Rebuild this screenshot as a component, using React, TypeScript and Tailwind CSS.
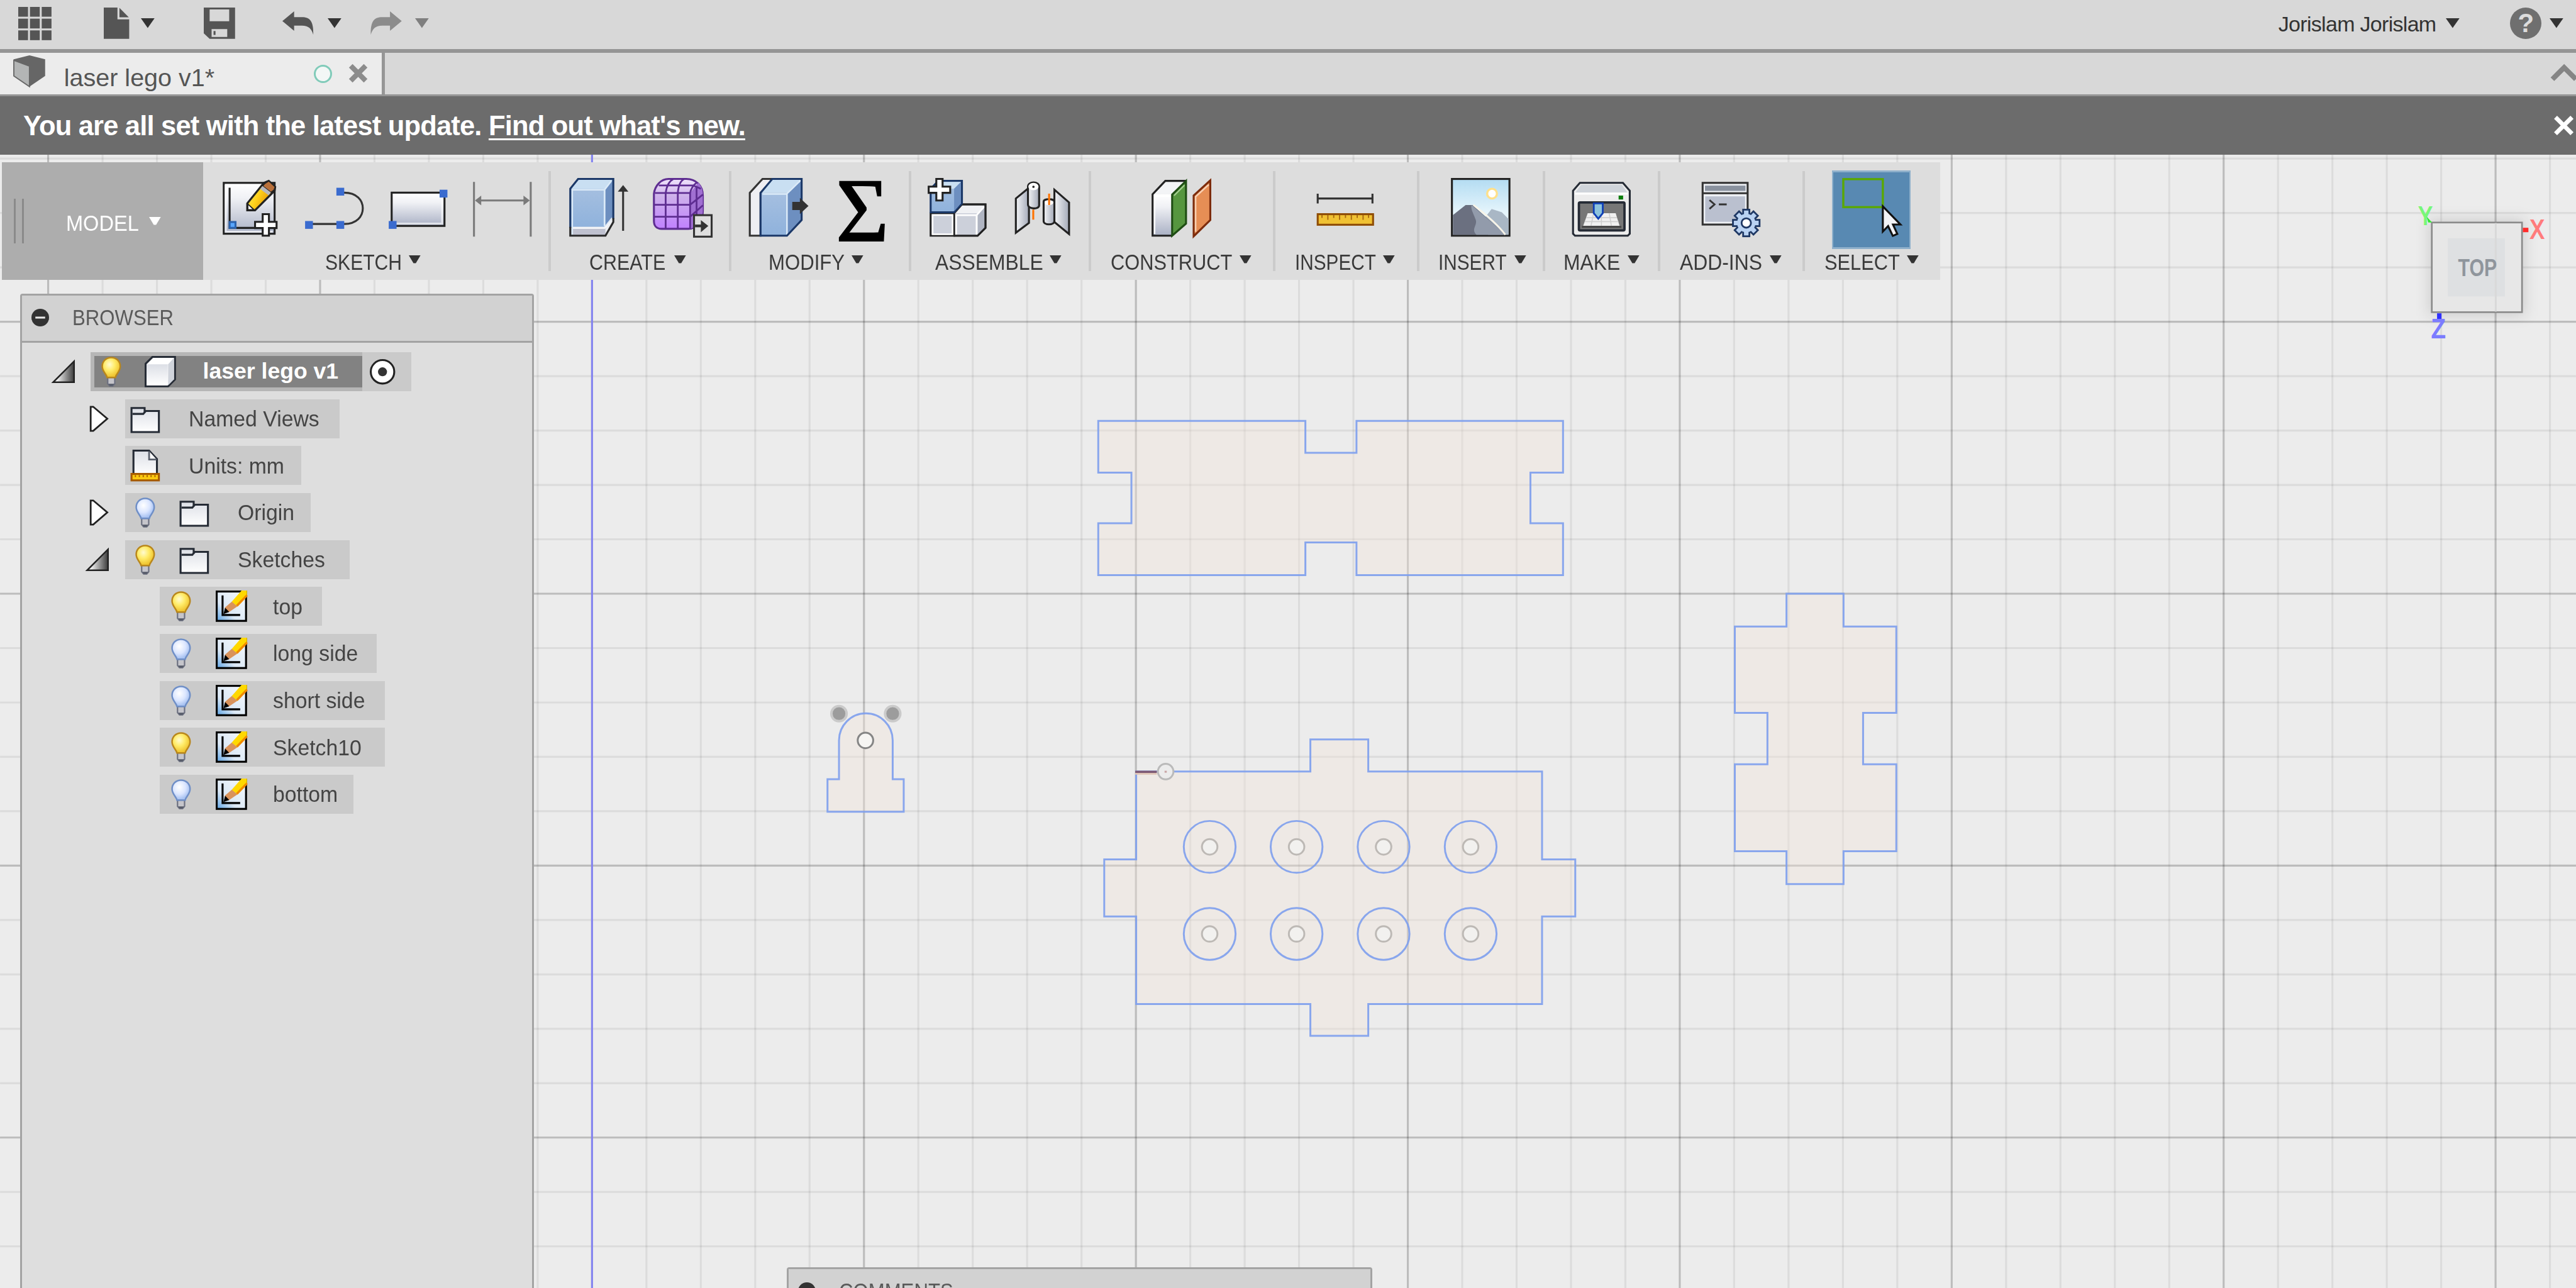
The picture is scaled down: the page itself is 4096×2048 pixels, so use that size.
import type { ReactNode } from "react";
import clsx from "clsx";

// One icon pixel on this display
const UNIT = 3.111;

const GRID_MINOR = 98.26;
const GRID_ORIGIN = { x: 1069.6, y: 1563.9 };

type IconProps = { w?: number; h?: number; className?: string; children: ReactNode };

function Icon({ w = 32, h = 32, className, children }: IconProps) {
  return (
    <svg
      width={w * UNIT}
      height={h * UNIT}
      viewBox={`0 0 ${w} ${h}`}
      fill="none"
      className={clsx("block shrink-0 overflow-visible", className)}
    >
      {children}
    </svg>
  );
}

function Caret({ className = "text-[#333]" }: { className?: string }) {
  return (
    <Icon w={7} h={5} className={className}>
      <path d="M0 0H7L3.5 5Z" fill="currentColor" />
    </Icon>
  );
}

function SmallCaret({ className = "text-[#333]" }: { className?: string }) {
  return (
    <Icon w={6} h={4} className={className}>
      <path d="M0 0H6L3.6 4H2.4Z" fill="currentColor" />
    </Icon>
  );
}

/* ---------- shared gradients ---------- */

function Gradients() {
  return (
    <svg width="0" height="0" className="absolute">
      <defs>
        <linearGradient id="paper" x1="0" y1="0" x2="0" y2="1">
          <stop offset="0" stopColor="#ffffff" />
          <stop offset="0.3" stopColor="#f0f1f5" />
          <stop offset="1" stopColor="#a9b0c4" />
        </linearGradient>
        <linearGradient id="sheet" x1="0" y1="0" x2="0" y2="1">
          <stop offset="0" stopColor="#dcdfe6" />
          <stop offset="1" stopColor="#ffffff" />
        </linearGradient>
        <linearGradient id="blueFace" x1="0" y1="0" x2="0" y2="1">
          <stop offset="0" stopColor="#a5bfe0" />
          <stop offset="1" stopColor="#8fb2dc" />
        </linearGradient>
        <linearGradient id="purpleFace" x1="0" y1="0" x2="0" y2="1">
          <stop offset="0" stopColor="#f0e4fc" />
          <stop offset="0.35" stopColor="#cdb0ea" />
          <stop offset="1" stopColor="#c081ff" />
        </linearGradient>
        <linearGradient id="steel" x1="0" y1="0" x2="1" y2="0">
          <stop offset="0" stopColor="#f4f5f7" />
          <stop offset="1" stopColor="#a3a9b8" />
        </linearGradient>
        <linearGradient id="sky" x1="0" y1="0" x2="0" y2="1">
          <stop offset="0" stopColor="#b3dcf2" />
          <stop offset="0.6" stopColor="#e6f5fc" />
        </linearGradient>
        <linearGradient id="wedge" x1="0" y1="0" x2="1" y2="0">
          <stop offset="0.2" stopColor="#f0f0f0" />
          <stop offset="1" stopColor="#3c3c3c" />
        </linearGradient>
        <linearGradient id="pencil" x1="0" y1="0" x2="1" y2="0.5">
          <stop offset="0" stopColor="#fff27a" />
          <stop offset="0.5" stopColor="#ffd21c" />
          <stop offset="1" stopColor="#e08a00" />
        </linearGradient>
        <linearGradient id="water" x1="0" y1="1" x2="1" y2="0">
          <stop offset="0" stopColor="#5aa2e4" />
          <stop offset="0.35" stopColor="#dbe8f5" />
          <stop offset="1" stopColor="#f5f9fd" />
        </linearGradient>
        <radialGradient id="bulbOn" cx="0.4" cy="0.35" r="0.6">
          <stop offset="0" stopColor="#fffbd0" />
          <stop offset="0.5" stopColor="#ffec6a" />
          <stop offset="1" stopColor="#f0c531" />
        </radialGradient>
        <radialGradient id="bulbOff" cx="0.4" cy="0.35" r="0.6">
          <stop offset="0" stopColor="#ffffff" />
          <stop offset="0.6" stopColor="#dbe6ff" />
          <stop offset="1" stopColor="#a9c3f2" />
        </radialGradient>
        <filter id="soft" x="-30%" y="-30%" width="160%" height="160%">
          <feGaussianBlur stdDeviation="12" />
        </filter>
      </defs>
    </svg>
  );
}

/* ---------- top bar ---------- */

function TopBar() {
  return (
    <header className="flex h-[78px] shrink-0 items-center bg-[#d8d8d8] pb-1 text-[#555]">
      <Icon w={17} h={17} className="ml-[29px]">
        {[0, 6, 12].map((y) =>
          [0, 6, 12].map((x) => <rect key={`${x}-${y}`} x={x} y={y} width="5" height="5" fill="currentColor" />)
        )}
      </Icon>

      <Icon w={13} h={16} className="ml-[83px]">
        <path d="M0 0H7V6H13V16H0Z" fill="currentColor" />
        <path d="M8 0.2L12.8 5H8Z" fill="currentColor" />
      </Icon>
      <div className="ml-[19px]"><Caret /></div>

      <Icon w={16} h={16} className="ml-[78px]">
        <path
          d="M0 0H16V16H3L0 13.2ZM3 1V7H13V1ZM4 11V15H12V11Z"
          fill="currentColor"
          fillRule="evenodd"
        />
        <rect x="5" y="12" width="1" height="2" fill="currentColor" />
      </Icon>

      <Icon w={16} h={12} className="ml-[75px]">
        <path d="M6 0V3H10C14 3 16 5 15.8 12C15 9 13.5 7.3 10 7.3H6V10L0 5Z" fill="currentColor" />
      </Icon>
      <div className="ml-[22px]"><Caret /></div>

      <Icon w={16} h={12} className="ml-[47px] text-[#8c8c8c]">
        <path d="M10 0V3H6C2 3 0 5 0.2 12C1 9 2.5 7.3 6 7.3H10V10L16 5Z" fill="currentColor" />
      </Icon>
      <div className="ml-[21px]"><Caret className="text-[#7f7f7f]" /></div>

      <div className="mr-5 ml-auto flex items-center">
        <span className="mt-[2px] text-[34px] leading-none tracking-[-0.7px] text-[#333]">Jorislam Jorislam</span>
        <div className="ml-4"><Caret /></div>
        <div className="ml-[80px] flex size-[50px] items-center justify-center rounded-full bg-[#6f6f6f] text-[42px] leading-none font-bold text-[#dcdcdc]">
          ?
        </div>
        <div className="ml-[13px]"><Caret /></div>
      </div>
    </header>
  );
}

function TabStrip() {
  return (
    <div className="flex h-[75px] shrink-0 border-t-6 border-b-3 border-[#959595] bg-[#d8d8d8]">
      <div className="flex w-[612px] items-center border-r-[5px] border-[#969696] bg-[#ececec]">
        <Icon w={16} h={16} className="mb-2 ml-[22px]">
          <path d="M8 0L16 2V10.5L8 16L0 10.5V2Z" fill="#666" />
          <path d="M0 2.5L8 5.5V16L0 10.5Z" fill="#b3b5b5" stroke="#666" strokeWidth="0.6" />
        </Icon>
        <span className="mt-[14px] ml-[30px] w-[242px] text-[39.5px] leading-none whitespace-nowrap text-[#555]">
          laser lego v1*
        </span>
        <div className="ml-[155px] size-[29px] rounded-full border-[3px] border-[#80cbb9] bg-[#f3f7f6]" />
        <Icon w={10} h={10} className="ml-[26px]">
          <path d="M1.2 1.2L8.8 8.8M8.8 1.2L1.2 8.8" stroke="#8c8c8c" strokeWidth="2.6" />
        </Icon>
      </div>
      <Icon w={13} h={8} className="mt-[19px] ml-auto">
        <path d="M0.8 7.4L6.8 1.4L12.8 7.4" stroke="#858585" strokeWidth="2.6" />
      </Icon>
    </div>
  );
}

function UpdateBanner() {
  return (
    <div className="flex h-[93px] shrink-0 items-center bg-[#6c6c6c] pl-[37px] text-white">
      <p className="mt-[2px] text-[43.5px] leading-none font-bold tracking-[-0.82px] whitespace-pre">
        You are all set with the latest update.{" "}
        <a href="#" className="underline decoration-[3px] underline-offset-[5px]">Find out what's new.</a>
      </p>
      <Icon w={10} h={10} className="mr-[4px] ml-auto">
        <path d="M0.8 0.8L9.2 9.2M9.2 0.8L0.8 9.2" stroke="#fff" strokeWidth="2.2" />
      </Icon>
    </div>
  );
}

/* ---------- toolbar icons ---------- */

function Plus({ x, y }: { x: number; y: number }) {
  return (
    <path
      transform={`translate(${x} ${y})`}
      d="M4.4 0.5H7.6V4.4H11.5V7.6H7.6V11.5H4.4V7.6H0.5V4.4H4.4Z"
      fill="#fff"
      stroke="#222"
    />
  );
}

const blueSquare = (x: number, y: number) => <rect x={x} y={y} width="4" height="4" fill="#3a6bcf" />;

function CreateSketchIcon() {
  return (
    <Icon>
      <rect x="2.5" y="2.5" width="26" height="26" fill="url(#paper)" stroke="#222" />
      <path d="M3.5 3.5V27.5H27.5" stroke="#fff" strokeOpacity="0.7" />
      <path d="M5.5 5V25.5H19" stroke="#222" />
      <rect x="5.5" y="22.5" width="3" height="3" fill="#58a6ff" stroke="#2b62ad" />
      <path d="M14.5 13L23 2.5L25.5 1.5L28.8 4.5L28.5 6.5L18.5 16.5H14.5Z" fill="url(#pencil)" stroke="#222" />
      <path d="M23.5 2.8L25.5 1.5L28.8 4.5L28.2 6.2L26.6 7.4L22.3 4.1Z" fill="#b9703a" stroke="#222" strokeWidth="0.6" />
      <path d="M22.3 4.1L26.6 7.4L25.4 8.8L21.1 5.6Z" fill="#b8b8bd" />
      <path d="M14.8 13.3L17.9 16.2H14.8Z" fill="#fff" stroke="#222" strokeWidth="0.6" />
      <Plus x={18} y={18} />
    </Icon>
  );
}

function SplineIcon() {
  return (
    <Icon>
      <path d="M3 23.5H21C27.5 23.5 30.5 19.5 30.5 15.5S27.5 7.5 21 7.5H19" stroke="#333" />
      {blueSquare(1, 22)}
      {blueSquare(17, 22)}
      {blueSquare(17, 5)}
    </Icon>
  );
}

function RectangleIcon() {
  return (
    <Icon>
      <rect x="2.5" y="7.5" width="27" height="17" fill="url(#paper)" stroke="#222" />
      <path d="M4 23.3H28.3V9" stroke="#fff" strokeOpacity="0.6" />
      {blueSquare(27, 6)}
      {blueSquare(1, 22)}
    </Icon>
  );
}

function DimensionIcon() {
  return (
    <Icon>
      <path d="M1.5 2V30M30.5 2V30M3 11.5H29" stroke="#7a7a7a" />
      <path d="M2 11.5L5.2 9V14ZM30 11.5L26.8 9V14Z" fill="#7a7a7a" />
    </Icon>
  );
}

function ExtrudeIcon() {
  return (
    <Icon>
      <path d="M2.5 25H20.5V29.5H2.5Z" fill="#bfc1cf" />
      <path d="M20.5 25L24.5 20V23L20.5 29.5Z" fill="#eceef2" />
      <path d="M2.5 5.5L6.5 0.5H24.5L20.5 5.5Z" fill="#c9dff2" />
      <path d="M2.5 5.5H20.5V25H2.5Z" fill="url(#blueFace)" />
      <path d="M20.5 5.5L24.5 0.5V20.5L20.5 25Z" fill="#6d8fc0" />
      <path d="M3.5 25.5H20L24 20.5" stroke="#fff" strokeOpacity="0.8" />
      <path d="M3.5 29V6H20V24.5M20 6L23.5 1.5" stroke="#dcebf8" strokeWidth="0.8" />
      <path d="M2.5 25.5V5.5L6.5 0.5H24.5V21" stroke="#1b3868" />
      <path d="M2.5 25V29.5H20.5L24.5 22.5V20.5" stroke="#2a2a2a" />
      <path d="M29.5 5V27" stroke="#333" />
      <path d="M29.5 3.6L32.2 7H26.8Z" fill="#333" />
    </Icon>
  );
}

function FormIcon() {
  return (
    <Icon>
      <path
        d="M2.5 8C3 4 6 0.5 10 0.5H19C24 0.5 27.5 4 27.5 9V17C27.5 22 24 26 20 26H6.5C3.5 26 2.5 24 2.5 22Z"
        fill="url(#purpleFace)"
        stroke="#5e2d91"
      />
      <path d="M21 8C23 5 24.5 3 25.3 2.5C27 4.5 27.5 6.5 27.5 9V17C27.5 21 24.5 24.5 21.3 26Z" fill="#a06fd2" />
      <path
        d="M3 7.7H21V26M8.5 7.7V26M14.7 7.7V26M2.5 13.7H21L27.5 8.5M2.5 19.8H21L27.5 14M5 3.8H22.5L26.5 5.5M8.5 7.7C9 4 10.5 1.5 12.5 0.5M14.7 7.7C15 4 16 1.5 18 0.5M21 7.7C21.5 5 23.5 3 24.5 2.2M24.3 4.2V23"
        stroke="#5e2d91"
        strokeWidth="0.9"
      />
      <rect x="23" y="19" width="9" height="11" fill="#dedede" stroke="#333" />
      <path d="M23.5 24.5H28" stroke="#333" strokeWidth="1.4" />
      <path d="M26.5 21.5L30.3 24.5L26.5 27.7Z" fill="#333" />
    </Icon>
  );
}

function PressPullIcon() {
  return (
    <Icon>
      <path d="M2 7.6L8.5 0.5H14L7.5 7.6V29.5H2Z" fill="#eeeef2" stroke="#333" />
      <path d="M7.5 7.6L13.5 0.5H28.5L21 7.6Z" fill="#c9dff2" />
      <path d="M7.5 7.6H21V29.5H7.5Z" fill="url(#blueFace)" />
      <path d="M21 7.6L28.5 0.5V21.5L21 29.5Z" fill="#6d8fc0" />
      <path d="M8.5 8.2H21V29M21 8L28 1.2" stroke="#dcebf8" strokeWidth="0.8" />
      <path d="M7.5 7.6L13.5 0.5H28.5V21.5L21 29.5H7.5Z" stroke="#1b3868" />
      <path d="M23.7 12.2H27.6V10.2L32 14.3L27.6 18.4V16.4H23.7Z" fill="#333" />
    </Icon>
  );
}

function ParametersIcon() {
  return (
    <div className="flex size-[100px] items-center justify-center pt-[4px] pl-[4px] font-['Liberation_Serif',serif] text-[144px] leading-none text-black [-webkit-text-stroke:2px_black]">
      Σ
    </div>
  );
}

function NewComponentIcon() {
  return (
    <Icon>
      <path d="M14.5 18L18.5 13.5H30.5V25.5L26.5 29.5H14.5Z" fill="#f0f1f4" stroke="#222" />
      <path d="M14.5 18H26.5V29.5H14.5Z" fill="#ccd0da" />
      <path d="M26.5 18L30.5 13.5V25.5L26.5 29.5Z" fill="#b0b5c2" />
      <path d="M15.5 29V19H26V29M26 19L30 14.5" stroke="#fff" strokeWidth="0.9" />
      <path d="M2.5 18H14.5V29.5H2.5Z" fill="#ccd0da" stroke="#222" />
      <path d="M3.5 28.8V19H13.7V28.8Z" stroke="#fff" strokeWidth="0.8" />
      <path d="M14.5 29.5H26.5L30.5 25.5V13.5H18.5" stroke="#222" />
      <path d="M2.5 5.5L6.5 1.5H18.5V13L14.5 17.5H2.5Z" fill="url(#blueFace)" stroke="#1b3868" />
      <path d="M4 5.5L7 2H18L14.5 5.5Z" fill="#c9dff2" />
      <path d="M14.5 5.5L18 2V13L14.5 17Z" fill="#6d8fc0" />
      <Plus x={1} y={0} />
    </Icon>
  );
}

function JointIcon() {
  return (
    <Icon>
      <path d="M3.3 10.5L10 5V23L3.3 28Z" fill="url(#steel)" stroke="#222" />
      <path d="M9.5 4.5C9.5 1.5 15.2 1.5 15.2 4.5V14C15.2 16.3 9.5 16 9.5 13.5Z" fill="url(#steel)" stroke="#222" />
      <ellipse cx="12.3" cy="4.4" rx="2.6" ry="1.9" fill="#fff" />
      <circle cx="12.3" cy="4.5" r="0.6" fill="#222" />
      <path d="M12.2 16.2V21.3" stroke="#ff7300" />
      <path d="M17.5 12C17.5 10.5 23 10.5 23 12V22C23 24.3 17.5 24.3 17.5 22Z" fill="url(#steel)" stroke="#222" />
      <path d="M23 6L30.5 12.5V28.7L23 22.5Z" fill="url(#steel)" stroke="#222" />
      <ellipse cx="20.2" cy="12.6" rx="2.2" ry="1.3" fill="#fff" />
      <path d="M20.3 8V13.8" stroke="#ff7300" />
    </Icon>
  );
}

function OffsetPlaneIcon() {
  return (
    <Icon>
      <path d="M1.5 8.3L8 1.5H18.5L11.5 8.3Z" fill="#f3f4f6" />
      <path d="M1.5 8.3H11.5V29.5H1.5Z" fill="url(#paper)" />
      <path d="M2.5 28.6V9.2H10.8" stroke="#fff" strokeWidth="0.8" />
      <path d="M11.5 29.5H1.5V8.3L8 1.5H18.5" stroke="#222" />
      <path d="M11.5 8.5L18.6 1.5V23.3L11.5 29.5Z" fill="#56963f" stroke="#1f4d14" />
      <path d="M12.5 9L17.8 3.7" stroke="#a5cf92" strokeWidth="0.7" />
      <path d="M22.5 9L31 1.2V21.5L22.5 29.8Z" fill="#e68e55" stroke="#7d2c0c" />
      <path d="M23.5 27.5V9.6L30.2 3.4" stroke="#f8d0b2" strokeWidth="0.8" />
    </Icon>
  );
}

function MeasureIcon() {
  return (
    <Icon>
      <path d="M2 8V13M30 8V13M2 10.5H30" stroke="#333" />
      <rect x="2" y="18.5" width="28.3" height="5.4" fill="#f0c133" stroke="#8f4d05" />
      <path d="M4.2 19V20.4M7.2 19V21.4M10.2 19V20.4M13.2 19V21.4M16.2 19V20.4M19.2 19V21.4M22.2 19V20.4M25.2 19V21.4M28 19V20.4" stroke="#a86710" strokeWidth="0.6" />
    </Icon>
  );
}

function InsertImageIcon() {
  return (
    <Icon>
      <rect x="1.5" y="0.5" width="29.4" height="29" fill="url(#sky)" stroke="#222" />
      <circle cx="22" cy="8" r="2.5" fill="#fff" stroke="#ffe08a" strokeWidth="1.1" />
      <path d="M17 22L21.8 15.8L27 17.5L30.4 21V29H20Z" fill="#a9b7c5" />
      <path d="M2 19L8.5 13.8H12L29 29H2Z" fill="#6b7080" />
      <path d="M11.5 13.8L29 29H14C11 26 15 24 13.5 21C12.5 18 11 16 11.5 13.8Z" fill="#929bab" />
      <path d="M12.5 13.8C18 18 25 24 28.8 29" stroke="#f8f4e8" strokeWidth="0.9" />
    </Icon>
  );
}

function MakeIcon() {
  return (
    <Icon>
      <path d="M5.5 2.5H27.5L31 6.5V28.5L30 29.5H3L2 28.5V6.5Z" fill="#ececec" stroke="#252b35" />
      <path d="M3.2 7.5L6 3.5H27L29.8 7.5Z" fill="#cfd4da" />
      <path d="M3 8H30" stroke="#fff" />
      <rect x="25.3" y="9" width="2.3" height="2" fill="#0a7d0a" />
      <rect x="5" y="12.5" width="23.3" height="14.3" rx="0.6" fill="#777" stroke="#252b35" strokeWidth="1.2" />
      <path d="M9.5 18H23.8L25.8 24.4H7.2Z" fill="#f0f0f0" />
      <path d="M6.5 25H26.7" stroke="#444" strokeWidth="1" />
      <path d="M8.8 20.3H24.4M8 22.3H25.2M12.5 18L11.2 24.4M16.5 18V24.4M20.5 18L21.6 24.4" stroke="#cfcfcf" strokeWidth="0.5" />
      <path d="M12.6 13H17.2V18L14.9 20.8L12.6 18Z" fill="#8dc3dd" stroke="#0f3fb5" strokeWidth="0.9" />
    </Icon>
  );
}

function ScriptsIcon() {
  return (
    <Icon>
      <rect x="1.7" y="2.5" width="23" height="21.3" fill="#eef0f4" stroke="#333" />
      <rect x="2.9" y="3.9" width="20.7" height="2.7" fill="#8a929f" />
      <path d="M1.7 7.8H24.7" stroke="#333" />
      <rect x="3" y="9.4" width="20.4" height="13" fill="#bac0cf" />
      <path d="M5.2 11.3L7.8 13.5L5.2 15.8M10 13.5H14" stroke="#333" strokeWidth="0.9" />
      <g transform="translate(24 23)">
        {[0, 45, 90, 135, 180, 225, 270, 315].map((a) => (
          <rect key={a} x="-1.6" y="-6.8" width="3.2" height="4.5" fill="#b9d2f2" stroke="#1f3864" strokeWidth="0.9" transform={`rotate(${a})`} />
        ))}
        <circle r="4.7" fill="#b9d2f2" />
        <circle r="2.4" fill="#fff" stroke="#1f3864" strokeWidth="0.9" />
      </g>
    </Icon>
  );
}

function SelectIcon() {
  return (
    <Icon>
      <rect x="1.6" y="0.6" width="20.2" height="14.3" stroke="#5aa800" strokeWidth="1.1" />
      <path d="M21.8 14.5V27.4L24.5 24.6L26.9 29.6L29.2 28.6L27 23.8H30.8Z" fill="#f2f3f6" stroke="#111" />
    </Icon>
  );
}

/* ---------- toolbar ---------- */

type Group = {
  label: string;
  width: string;
  labelBox: string;
  stretch: string;
  nudge?: string;
  icons: (() => ReactNode)[];
};

const groups: Group[] = [
  { label: "SKETCH", width: "w-[551px]", labelBox: "w-[121px]", stretch: "scale-x-[0.86]", nudge: "mr-[12px]", icons: [CreateSketchIcon, SplineIcon, RectangleIcon, DimensionIcon] },
  { label: "CREATE", width: "w-[287px] pr-[4px]", labelBox: "w-[123px]", stretch: "scale-x-[0.87]", nudge: "mr-[4px]", icons: [ExtrudeIcon, FormIcon] },
  { label: "MODIFY", width: "w-[286px] pr-[3px]", labelBox: "w-[120px]", stretch: "scale-x-[0.89]", nudge: "mr-[10px]", icons: [PressPullIcon, ParametersIcon] },
  { label: "ASSEMBLE", width: "w-[286px] pr-[3px]", labelBox: "w-[170px]", stretch: "scale-x-[0.91]", nudge: "mr-[3px]", icons: [NewComponentIcon, JointIcon] },
  { label: "CONSTRUCT", width: "w-[293px] pr-[3px]", labelBox: "w-[193px]", stretch: "scale-x-[0.88]", icons: [OffsetPlaneIcon] },
  { label: "INSPECT", width: "w-[229px] pr-[4px]", labelBox: "w-[128px]", stretch: "scale-x-[0.85]", icons: [MeasureIcon] },
  { label: "INSERT", width: "w-[200px] pr-[2px]", labelBox: "w-[109px]", stretch: "scale-x-[0.85]", nudge: "ml-[5px]", icons: [InsertImageIcon] },
  { label: "MAKE", width: "w-[183px] pr-[3px]", labelBox: "w-[90px]", stretch: "scale-x-[0.91]", nudge: "ml-[2px]", icons: [MakeIcon] },
  { label: "ADD-INS", width: "w-[230px] pr-[2px]", labelBox: "w-[131px]", stretch: "scale-x-[0.91]", icons: [ScriptsIcon] },
  { label: "SELECT", width: "w-[217px] pr-[2px]", labelBox: "w-[119px]", stretch: "scale-x-[0.88]", icons: [SelectIcon] },
];

function ToolGroup({ group, last }: { group: Group; last: boolean }) {
  return (
    <div className={clsx("relative flex shrink-0 flex-col items-center pt-[13px]", group.width)}>
      <div className="flex gap-[9px]">
        {group.icons.map((ToolIcon, i) => (
          <div
            key={i}
            className={clsx(
              "flex size-[124.5px] items-center justify-center",
              group.label === "SELECT" && "border-x-2 border-y-[3px] border-[#8fb0cb] bg-[#5889b2]"
            )}
          >
            <ToolIcon />
          </div>
        ))}
      </div>
      <div className={clsx("mt-[3px] flex h-[36px] items-center gap-[12px]", group.nudge)}>
        <span className={clsx("text-[35px] leading-none whitespace-nowrap text-[#3a3a3a]", group.labelBox)}>
          <span className={clsx("inline-block origin-left", group.stretch)}>{group.label}</span>
        </span>
        <div className="-mt-2"><SmallCaret /></div>
      </div>
      {!last && <div className="absolute top-[14px] -right-[2px] h-[159px] w-1 bg-[#cbcbcb]" />}
    </div>
  );
}

function Toolbar() {
  return (
    <div className="mt-[12px] ml-[3px] flex h-[187px] w-[3082px] shrink-0 bg-[#ddd]">
      <div className="flex w-[320px] shrink-0 items-center bg-[#adadad] text-white">
        <div className="ml-[19px] h-[71px] w-[16px] border-x-[3px] border-[#8a8a8a]" />
        <span className="mt-[6px] ml-[67px] w-[117px] text-[35px] leading-none">
          <span className="inline-block origin-left scale-x-[0.93]">MODEL</span>
        </span>
        <div className="ml-[15px]"><SmallCaret className="text-white" /></div>
      </div>
      {groups.map((group, i) => (
        <ToolGroup key={group.label} group={group} last={i === groups.length - 1} />
      ))}
    </div>
  );
}

/* ---------- browser tree ---------- */

function Bulb({ on }: { on: boolean }) {
  return (
    <Icon w={16} h={16}>
      <path d="M6.2 11H9.8V14.2L8.8 15.3H7.2L6.2 14.2Z" fill="#c5c5cb" stroke="#6c7080" strokeWidth="0.7" />
      <path d="M6.5 14.2H9.5L8.7 15.3H7.3Z" fill="#555a68" />
      <path
        d="M8 0.8C10.8 0.8 12.6 2.9 12.6 5.4C12.6 8 10.4 9.2 10.1 11H5.9C5.6 9.2 3.4 8 3.4 5.4C3.4 2.9 5.2 0.8 8 0.8Z"
        fill={on ? "url(#bulbOn)" : "url(#bulbOff)"}
        stroke={on ? "#b9871c" : "#6f8fc7"}
        strokeWidth="0.8"
      />
    </Icon>
  );
}

function BodyIcon() {
  return (
    <Icon w={16} h={16}>
      <path d="M0.5 4L4 0.5H15.5V12L12 15.5H0.5Z" fill="#fff" stroke="#252b35" />
      <path d="M1 4.3H11.8V15H1Z" fill="url(#sheet)" />
      <path d="M12 4.3L15 1V12L12 15Z" fill="#d0d4dc" />
    </Icon>
  );
}

function FolderIcon() {
  return (
    <Icon w={16} h={16}>
      <path d="M1 2.5H7.7V4H15V14.8H1Z" fill="url(#sheet)" stroke="#252b35" />
      <path d="M1.5 5.5H7L8.2 4.2" stroke="#252b35" />
    </Icon>
  );
}

function UnitsIcon() {
  return (
    <Icon w={16} h={16}>
      <path d="M2 0.5H10L14 4.8V13H2Z" fill="url(#sheet)" stroke="#252b35" />
      <path d="M10 0.8V5H13.8" fill="#fff" stroke="#5a606c" strokeWidth="0.9" />
      <rect x="1" y="12.4" width="14" height="3.3" fill="#fbc910" stroke="#a65a00" />
      <path d="M3 13V14M5 13V14M7 13V14M9 13V14M11 13V14M13 13V14" stroke="#a65a00" strokeWidth="0.6" />
    </Icon>
  );
}

function SketchIcon() {
  return (
    <Icon w={16} h={16}>
      <rect x="0.5" y="0.5" width="15" height="15" fill="url(#water)" stroke="#000" />
      <path d="M3.5 2.5V12.5H12.5" stroke="#000" />
      <path d="M4.8 8.6L8.3 5.6L11.2 8L6.8 11L4.2 11.8Z" fill="#d9935c" />
      <path d="M4 12L4.8 8.8L6.9 10.9Z" fill="#000" />
      <path d="M8.2 5.7L13.2 0H16V3L11.2 8.1Z" fill="#ffd800" />
      <path d="M16 2.4L10.8 7.8" stroke="#f08a00" strokeWidth="1.1" />
    </Icon>
  );
}

function Expander({ open }: { open?: boolean }) {
  return open ? (
    <Icon w={12} h={12}>
      <path d="M11.5 0.8V11.5H0.8Z" fill="url(#wedge)" stroke="#222" strokeWidth="0.8" />
    </Icon>
  ) : (
    <Icon w={10} h={14}>
      <path d="M0.7 0.9H2L9.2 7L2 13.2H0.7Z" fill="#fff" stroke="#222" strokeWidth="0.9" />
    </Icon>
  );
}

type Node = {
  label: string;
  level: 2 | 3;
  width: string;
  expander?: "open" | "closed";
  bulb?: boolean;
  icon: () => ReactNode;
};

const nodes: Node[] = [
  { label: "Named Views", level: 2, width: "w-[341px]", expander: "closed", icon: FolderIcon },
  { label: "Units: mm", level: 2, width: "w-[280px]", icon: UnitsIcon },
  { label: "Origin", level: 2, width: "w-[295px]", expander: "closed", bulb: false, icon: FolderIcon },
  { label: "Sketches", level: 2, width: "w-[357px]", expander: "open", bulb: true, icon: FolderIcon },
  { label: "top", level: 3, width: "w-[258px]", bulb: true, icon: SketchIcon },
  { label: "long side", level: 3, width: "w-[345px]", bulb: false, icon: SketchIcon },
  { label: "short side", level: 3, width: "w-[358px]", bulb: false, icon: SketchIcon },
  { label: "Sketch10", level: 3, width: "w-[358px]", bulb: true, icon: SketchIcon },
  { label: "bottom", level: 3, width: "w-[308px]", bulb: false, icon: SketchIcon },
];

function TreeRow({ node }: { node: Node }) {
  const NodeIcon = node.icon;
  return (
    <div className="flex h-[62px] items-center">
      <div className={clsx("flex shrink-0 justify-end pr-[26px]", node.level === 2 ? "w-[164px]" : "w-[219px]")}>
        {node.expander && <Expander open={node.expander === "open"} />}
      </div>
      <div className={clsx("flex h-full items-center bg-[#cacaca]", node.level === 2 ? "pl-[7px]" : "pl-[9px]", node.width)}>
        {node.bulb !== undefined && (
          <div className={node.level === 2 ? "mr-[28px]" : "mr-[30px]"}><Bulb on={node.bulb} /></div>
        )}
        <NodeIcon />
        <span className={clsx("text-[35px] leading-none whitespace-nowrap text-[#444]", node.level === 2 ? "ml-[44px]" : "ml-[41px]")}>
          <span className="inline-block origin-left scale-x-[0.965]">{node.label}</span>
        </span>
      </div>
    </div>
  );
}

function PanelHeader({ title }: { title: string }) {
  return (
    <div className="flex h-[75px] shrink-0 items-center border-b-[3px] border-[#a3a3a3] bg-[#d2d2d2] pb-[2px] pl-[15px]">
      <Icon w={9} h={9}>
        <circle cx="4.5" cy="4.5" r="4.5" fill="#333" />
        <path d="M2 4.5H7" stroke="#e8e8e8" />
      </Icon>
      <span className="mb-[2px] ml-[37px] text-[35px] leading-none text-[#5a5a5a]">
        <span className="inline-block origin-left scale-x-[0.89]">{title}</span>
      </span>
    </div>
  );
}

function BrowserPanel() {
  return (
    <aside className="mt-[22px] ml-[32px] flex w-[817px] flex-col rounded-t border-x-[3px] border-t-[3px] border-[#a3a3a3] bg-[#dedede]">
      <PanelHeader title="BROWSER" />
      <div className="mt-[15px] flex flex-col gap-[12.66px]">
        <div className="flex h-[62px] items-center">
          <div className="flex w-[109px] shrink-0 justify-end pr-[25px]">
            <Expander open />
          </div>
          <div className="flex h-full w-[510px] bg-[#cacaca]">
            <div className="h-full w-[432px] bg-[#b6b6b6] py-[6px] pl-[6px]">
              <div className="flex h-full items-center bg-[#828282]">
                <div className="ml-[2px]"><Bulb on /></div>
                <div className="ml-[28px]"><BodyIcon /></div>
                <span className="ml-[43px] text-[35.6px] leading-none font-bold whitespace-nowrap text-white">
                  laser lego v1
                </span>
              </div>
            </div>
            <Icon w={13} h={13} className="ml-[12px] self-center">
              <circle cx="6.5" cy="6.5" r="6" fill="#fff" stroke="#222" />
              <circle cx="6.5" cy="6.5" r="2.3" fill="#333" />
            </Icon>
          </div>
        </div>
        {nodes.map((node) => (
          <TreeRow key={node.label} node={node} />
        ))}
      </div>
    </aside>
  );
}

/* ---------- canvas ---------- */

function GridLines() {
  const columns = Array.from({ length: 48 }, (_, i) => i - 10);
  const rows = Array.from({ length: 21 }, (_, i) => i - 13);
  return (
    <g>
      {columns.map((i) => {
        const x = GRID_ORIGIN.x + i * GRID_MINOR;
        return (
          <line key={i} x1={x} x2={x} y1="279" y2="2327" stroke="#000" strokeOpacity={i % 5 === 0 ? 0.2 : 0.065} strokeWidth="3.6" />
        );
      })}
      {rows.map((i) => {
        const y = GRID_ORIGIN.y + i * GRID_MINOR;
        return (
          <line key={i} x1="0" x2="4654" y1={y} y2={y} stroke="#000" strokeOpacity={i % 5 === 0 ? 0.2 : 0.065} strokeWidth="3.6" />
        );
      })}
      <line x1={GRID_ORIGIN.x} x2={GRID_ORIGIN.x} y1="279" y2="2327" stroke="#8484f2" strokeWidth="3.4" />
    </g>
  );
}

const profiles = [
  // long side
  "M1984.2 760.5H2358.4V818H2450.7V760.5H2823.9V853.8H2765V945.3H2823.9V1039.2H2450.7V980H2358.4V1039.2H1984.2V945.3H2044.1V853.8H1984.2Z",
  // short side
  "M3227.6 1072.5H3330.7V1132H3426V1288H3366V1380.7H3426V1538H3330.7V1597.2H3227.6V1538H3134.3V1380.7H3193.2V1288H3134.3V1132H3227.6Z",
  // top plate
  "M2052.7 1393.8H2367.4V1336H2472V1393.8H2786V1552.6H2846V1655.9H2786V1814H2472V1871.3H2367.4V1814H2052.7V1655.9H1995V1552.6H2052.7Z",
  // stud
  "M1515.8 1407.7V1337.7A48.5 49 0 0 1 1612.8 1337.7V1407.7H1632.7V1466.7H1495V1407.7Z",
];

function Sketches() {
  return (
    <g>
      {profiles.map((d) => (
        <path key={d} d={d} fill="#f3e5d9" fillOpacity="0.38" stroke="#7d9eed" strokeWidth="3.4" strokeOpacity="0.9" />
      ))}
      {[1530, 1687.3].map((cy) =>
        [2185.5, 2342.5, 2499.7, 2657].map((cx) => (
          <g key={`${cx}-${cy}`} fill="none">
            <circle cx={cx} cy={cy} r="46.8" stroke="#7d9eed" strokeWidth="3.4" strokeOpacity="0.9" />
            <circle cx={cx} cy={cy} r="14" fill="#f2f1ef" stroke="#bdb9b5" strokeWidth="3.4" />
          </g>
        ))
      )}

      <circle cx="1563.6" cy="1337.7" r="14" fill="#f6f5f3" stroke="#858585" strokeWidth="3.4" />
      {[1515.8, 1612.8].map((cx) => (
        <g key={cx}>
          <circle cx={cx} cy="1289.3" r="16" fill="#000" fillOpacity="0.14" />
          <circle cx={cx} cy="1289.3" r="11.5" fill="#9c9c9c" />
        </g>
      ))}

      <path d="M2051 1394.5H2090" stroke="#7d5a74" strokeWidth="4" />
      <path d="M2051 1398H2090" stroke="#dfc4b6" strokeWidth="3" />
      <circle cx="2106" cy="1394" r="14" fill="#ececec" stroke="#bababa" strokeWidth="3.4" />
      <rect x="2104" y="1392.5" width="4" height="3.5" fill="#c9a5a5" />
    </g>
  );
}

function ViewCube() {
  return (
    <g fontFamily="'Liberation Sans', sans-serif">
      <rect x="4388" y="396" width="174" height="174" fill="#000" fillOpacity="0.12" filter="url(#soft)" />
      <rect x="4393.5" y="402" width="163" height="162" fill="#e7e7e7" stroke="#8a8a8a" strokeWidth="3" />
      <rect x="4422.5" y="430.5" width="103" height="105" fill="#dee0e2" />
      <path d="M4509 403V563" stroke="#d9d9d9" strokeWidth="3.5" />
      <text x="4476" y="499" fontSize="45" fontWeight="bold" fill="#8f959c" textAnchor="middle" textLength="70" lengthAdjust="spacingAndGlyphs">
        TOP
      </text>
      <text x="4382" y="406" fontSize="47" fill="#79f779" stroke="#79f779" strokeWidth="2.4" textAnchor="middle" textLength="24" lengthAdjust="spacingAndGlyphs">Y</text>
      <path d="M4384 391L4394 402H4387Z" fill="#33e833" />
      <path d="M4558 415.5H4568" stroke="#ff2b2b" strokeWidth="8" />
      <text x="4584" y="431" fontSize="48" fill="#ff7c7c" stroke="#ff7c7c" strokeWidth="2.4" textAnchor="middle" textLength="25" lengthAdjust="spacingAndGlyphs">X</text>
      <path d="M4407 566V577" stroke="#2f2fff" strokeWidth="8" />
      <text x="4405.5" y="610" fontSize="48" fill="#7c7cff" stroke="#7c7cff" strokeWidth="2.4" textAnchor="middle" textLength="25" lengthAdjust="spacingAndGlyphs">Z</text>
    </g>
  );
}

function Canvas() {
  return (
    <svg width="4096" height="1802" viewBox="0 279.5 4654 2047.5" className="absolute inset-0 block">
      <GridLines />
      <Sketches />
      <ViewCube />
    </svg>
  );
}

export default function App() {
  return (
    <div className="flex h-[2048px] w-[4096px] flex-col overflow-hidden bg-[#ececec] font-['Liberation_Sans',Arial,sans-serif]">
      <Gradients />
      <TopBar />
      <TabStrip />
      <UpdateBanner />
      <main className="relative min-h-0 flex-1 overflow-hidden">
        <Canvas />
        <div className="relative flex h-full flex-col">
          <Toolbar />
          <div className="flex min-h-0 flex-1">
            <BrowserPanel />
            <section className="ml-[402px] h-[33px] w-[931px] self-end overflow-hidden rounded-t border-x-[3px] border-t-[3px] border-[#a3a3a3] bg-[#d2d2d2]">
              <PanelHeader title="COMMENTS" />
            </section>
          </div>
        </div>
      </main>
    </div>
  );
}
